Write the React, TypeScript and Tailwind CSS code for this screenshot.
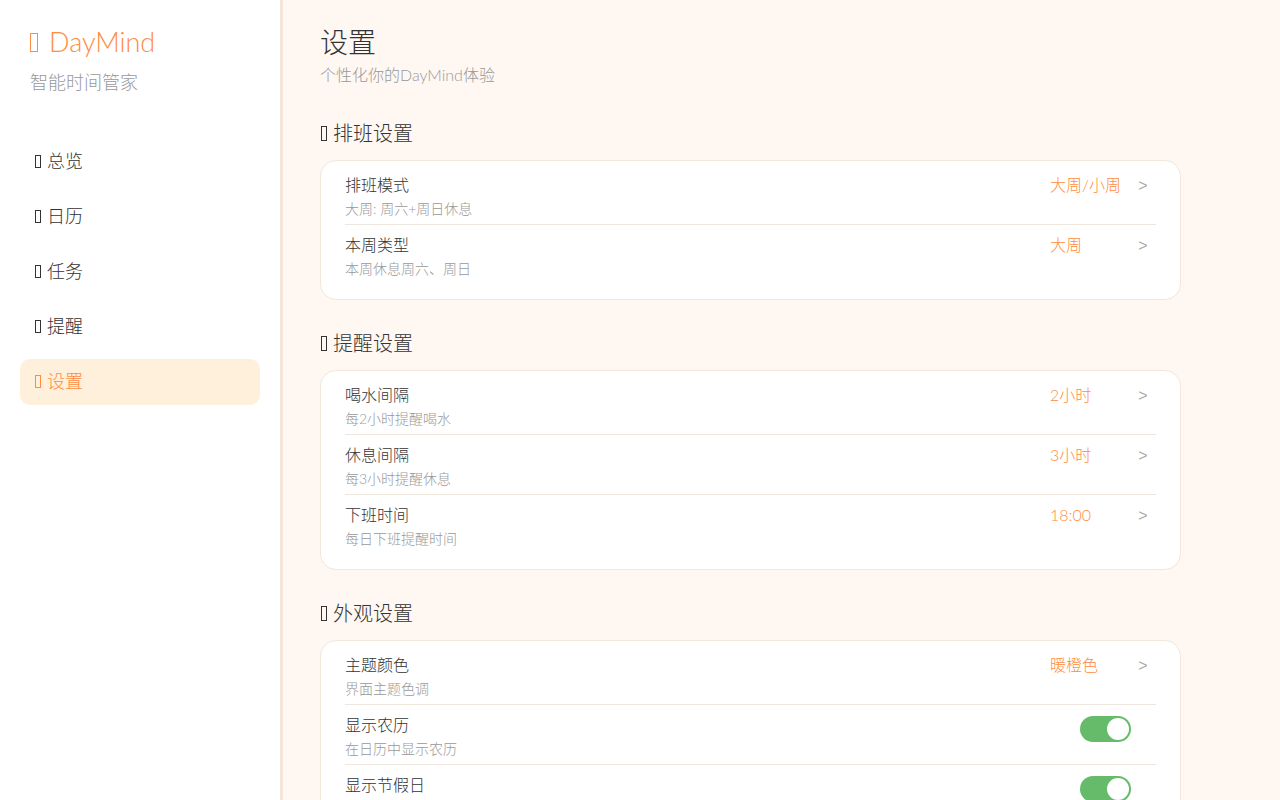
import React from "react";

const Tofu = ({ className = "" }: { className?: string }) => (
  <span className={`inline-block border border-current align-middle box-border ${className}`} />
);

type Row = { title: string; desc: string; value?: string; toggle?: boolean };

const sections: { title: string; rows: Row[] }[] = [
  {
    title: "排班设置",
    rows: [
      { title: "排班模式", desc: "大周: 周六+周日休息", value: "大周/小周" },
      { title: "本周类型", desc: "本周休息周六、周日", value: "大周" },
    ],
  },
  {
    title: "提醒设置",
    rows: [
      { title: "喝水间隔", desc: "每2小时提醒喝水", value: "2小时" },
      { title: "休息间隔", desc: "每3小时提醒休息", value: "3小时" },
      { title: "下班时间", desc: "每日下班提醒时间", value: "18:00" },
    ],
  },
  {
    title: "外观设置",
    rows: [
      { title: "主题颜色", desc: "界面主题色调", value: "暖橙色" },
      { title: "显示农历", desc: "在日历中显示农历", toggle: true },
      { title: "显示节假日", desc: "显示法定节假日", toggle: true },
    ],
  },
];

const nav = ["总览", "日历", "任务", "提醒", "设置"];

export default function App() {
  return (
    <div
      className="flex w-[1280px] h-[800px] overflow-hidden bg-[#fff7f1] font-light"
      style={{ fontFamily: 'Lato, "Noto Sans CJK SC", sans-serif' }}
    >
      <aside className="w-[283px] shrink-0 h-full bg-white border-r-[3px] border-[#f2e6dc] px-5 pt-[25px]">
        <div className="pl-[10px] text-[27px] leading-[34px] text-[#ff8c42] flex items-center">
          <Tofu className="w-[8px] h-[19px] mr-[11px]" />
          <span>DayMind</span>
        </div>
        <div className="pl-[10px] mt-[10px] text-[18px] leading-[26px] text-[#999999]">智能时间管家</div>
        <nav className="mt-[44px] flex flex-col gap-[9px]">
          {nav.map((n) => {
            const active = n === "设置";
            return (
              <div
                key={n}
                className={`h-[46px] rounded-[10px] px-[15px] pb-[2px] flex items-center text-[18px] ${
                  active ? "bg-[#fff0dc] text-[#ff8c42]" : "text-[#333333]"
                }`}
              >
                <Tofu className="w-[6px] h-[13px] mr-[6px]" />
                <span>{n}</span>
              </div>
            );
          })}
        </nav>
      </aside>
      <main className="flex-1 pl-[37px] pt-[24px]">
        <h1 className="text-[28px] leading-[36px] text-[#333333] font-light">设置</h1>
        <p className="text-[16px] leading-[20px] text-[#999999] mt-[5px]">个性化你的DayMind体验</p>
        <div className="mt-[34px] max-w-[861px]">
          {sections.map((s) => (
            <section key={s.title} className="mb-[29px]">
              <h2 className="h-[28px] text-[20px] leading-[26px] text-[#333333] font-light flex items-center">
                <Tofu className="w-[6px] h-[15px] ml-[1px] mr-[6px] text-[#333333]" />
                <span>{s.title}</span>
              </h2>
              <div className="mt-[13px] bg-white border border-[#f3e6da] rounded-[16px] px-[24px] pt-[4px] pb-[15px]">
                {s.rows.map((r, i) => (
                  <div
                    key={r.title}
                    className={`flex items-start pt-[10px] pb-[5px] ${
                      i < s.rows.length - 1 ? "border-b border-[#efe6de]" : ""
                    }`}
                  >
                    <div className="flex-1">
                      <div className="text-[16px] leading-[20px] text-[#333333]">{r.title}</div>
                      <div className="mt-[4px] text-[14px] leading-[20px] text-[#999999]">{r.desc}</div>
                    </div>
                    {r.toggle ? (
                      <div className="mr-[25px] mt-[1px] w-[51px] h-[26px] rounded-full bg-[#66bb6a] relative">
                        <div className="absolute right-[2px] top-[2px] w-[22px] h-[22px] rounded-full bg-white" />
                      </div>
                    ) : (
                      <div className="flex items-start">
                        <div className="w-[80px] text-[16px] leading-[20px] text-[#ff8c42]">{r.value}</div>
                        <div
                          className="w-[26px] mt-[1px] text-center text-[16px] leading-[20px] text-[#aaaaaa] font-normal"
                          style={{ fontFamily: '"Liberation Sans", sans-serif' }}
                        >
                          &gt;
                        </div>
                      </div>
                    )}
                  </div>
                ))}
              </div>
            </section>
          ))}
        </div>
      </main>
    </div>
  );
}
